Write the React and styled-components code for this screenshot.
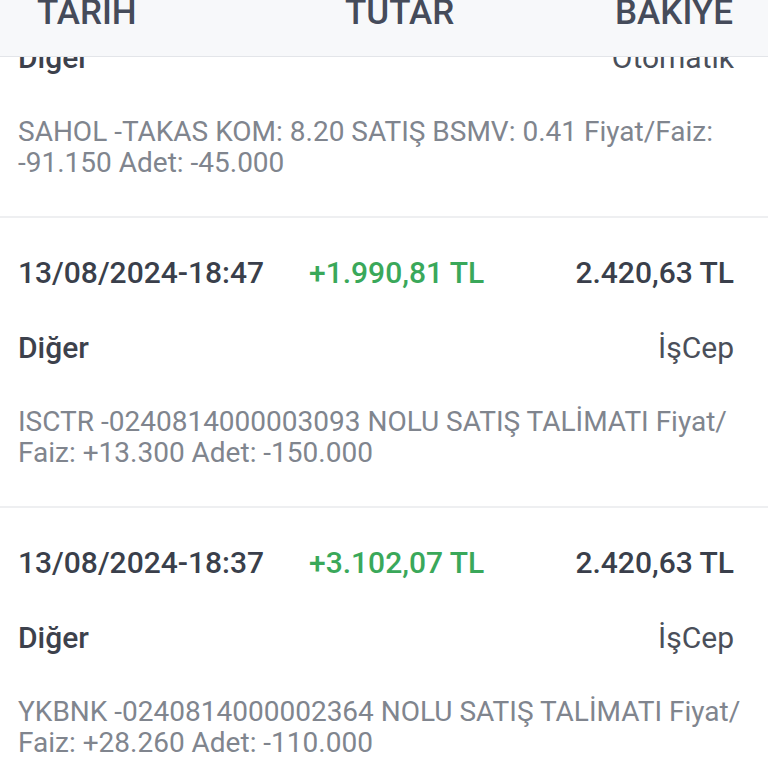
import React from "react";
import styled, { createGlobalStyle } from "styled-components";

const Global = createGlobalStyle`
  html, body { margin: 0; padding: 0; background: #ffffff; }
  body { font-family: Roboto, "Noto Sans", sans-serif; -webkit-font-smoothing: antialiased; }
  #root { width: 768px; height: 768px; }
`;

const Viewport = styled.div`
  position: relative;
  width: 768px;
  height: 768px;
  overflow: hidden;
  background: #ffffff;
`;

const Header = styled.div`
  position: absolute;
  top: 0;
  left: 0;
  right: 0;
  z-index: 2;
  height: 57px;
  background: #f7f8fa;
  border-bottom: 1px solid #e3e5e9;
  display: grid;
  grid-template-columns: 308px 1fr auto;
  align-items: start;
  padding: 0 35px 0 37px;
  box-sizing: border-box;
  overflow: hidden;
`;

const HeaderLabel = styled.div`
  margin-top: -5px;
  font-size: 35px;
  line-height: 36px;
  font-weight: 500;
  color: #454b5a;
`;

const List = styled.div`
  display: flex;
  flex-direction: column;
  margin-top: -72px;
`;

const Row = styled.div`
  display: flex;
  flex-direction: column;
  padding: 37px 14px 38px 18px;
  border-bottom: 2px solid #eeeff1;
`;

const TopLine = styled.div`
  display: grid;
  grid-template-columns: 291px 1fr auto;
  align-items: center;
  padding-right: 20px;
  font-size: 30px;
  line-height: 36px;
  font-weight: 500;
  color: #3a3f4b;
`;

const Amount = styled.span`
  color: ${(p) => (p.$positive ? "#3aa85a" : "#d64545")};
`;

const TypeLine = styled.div`
  display: flex;
  justify-content: space-between;
  align-items: center;
  margin-top: 39px;
  padding-right: 20px;
  font-size: 30px;
  line-height: 36px;
`;

const TypeName = styled.span`
  font-weight: 500;
  color: #3d414c;
`;

const Channel = styled.span`
  font-weight: 400;
  color: #4a4f5a;
`;

const Desc = styled.div`
  margin-top: 40px;
  font-size: 28px;
  line-height: 31px;
  color: #80858e;
  white-space: nowrap;
`;

const rows = [
  {
    date: "13/08/2024-18:52",
    amount: "-8,61 TL",
    positive: false,
    balance: "2.420,63 TL",
    type: "Diğer",
    channel: "Otomatik",
    desc: ["SAHOL -TAKAS KOM: 8.20 SATIŞ BSMV: 0.41 Fiyat/Faiz:", "-91.150 Adet: -45.000"],
  },
  {
    date: "13/08/2024-18:47",
    amount: "+1.990,81 TL",
    positive: true,
    balance: "2.420,63 TL",
    type: "Diğer",
    channel: "İşCep",
    desc: ["ISCTR -0240814000003093 NOLU SATIŞ TALİMATI Fiyat/", "Faiz: +13.300 Adet: -150.000"],
  },
  {
    date: "13/08/2024-18:37",
    amount: "+3.102,07 TL",
    positive: true,
    balance: "2.420,63 TL",
    type: "Diğer",
    channel: "İşCep",
    desc: ["YKBNK -0240814000002364 NOLU SATIŞ TALİMATI Fiyat/", "Faiz: +28.260 Adet: -110.000"],
  },
];

export default function App() {
  return (
    <>
      <Global />
      <Viewport>
        <Header>
          <HeaderLabel>TARİH</HeaderLabel>
          <HeaderLabel>TUTAR</HeaderLabel>
          <HeaderLabel>BAKİYE</HeaderLabel>
        </Header>
        <List>
          {rows.map((r, i) => (
            <Row key={i}>
              <TopLine>
                <span>{r.date}</span>
                <Amount $positive={r.positive}>{r.amount}</Amount>
                <span>{r.balance}</span>
              </TopLine>
              <TypeLine>
                <TypeName>{r.type}</TypeName>
                <Channel>{r.channel}</Channel>
              </TypeLine>
              <Desc>
                {r.desc[0]}
                <br />
                {r.desc[1]}
              </Desc>
            </Row>
          ))}
        </List>
      </Viewport>
    </>
  );
}
